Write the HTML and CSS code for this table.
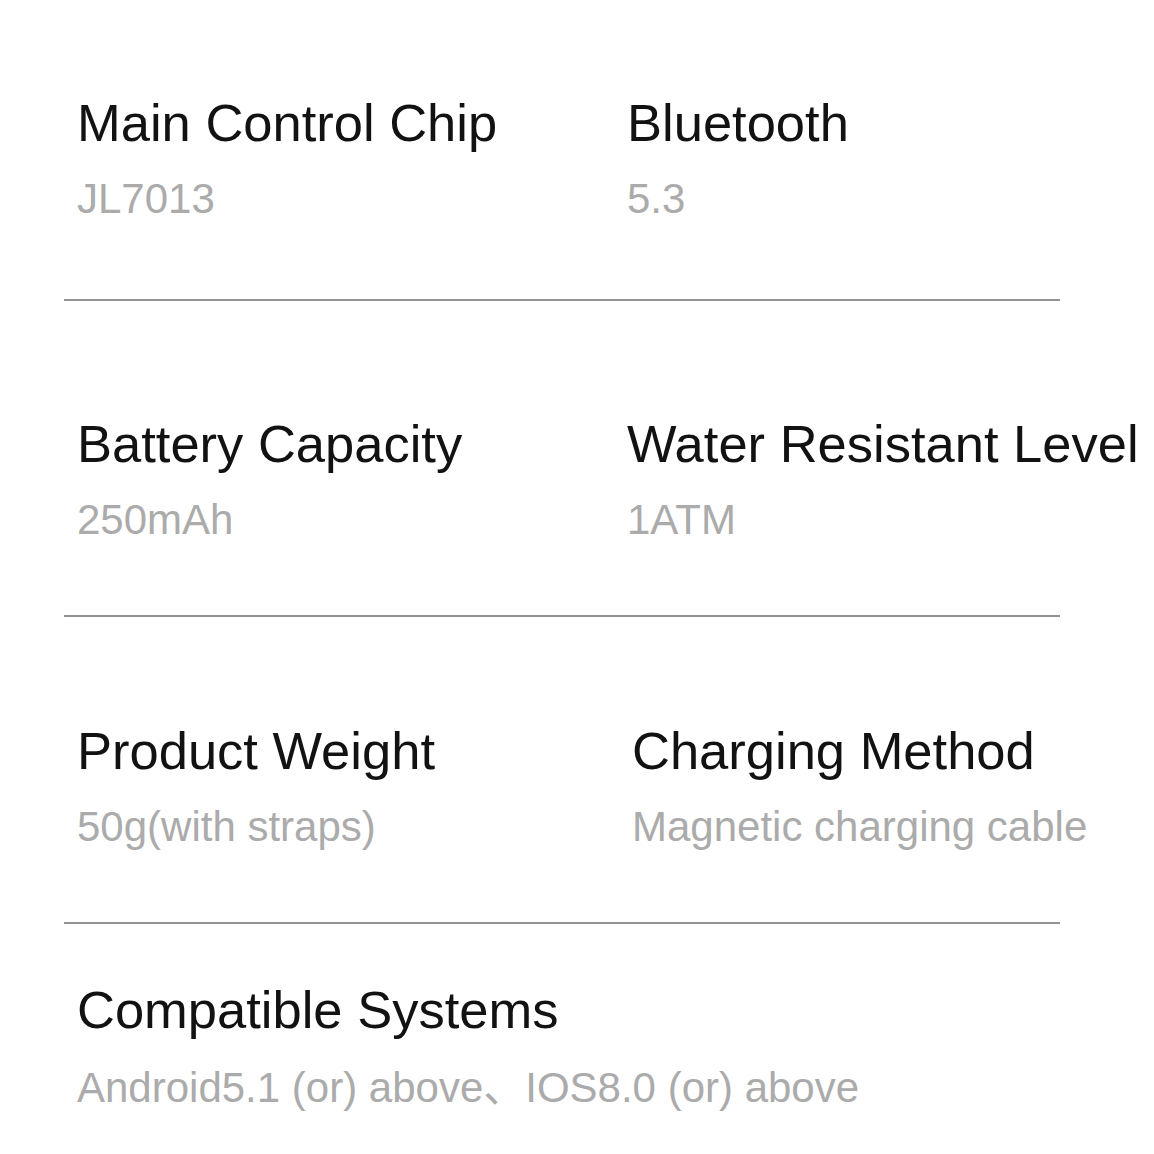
FILE: index.html
```html
<!DOCTYPE html>
<html lang="en">
<head>
<meta charset="utf-8">
<title>Specifications</title>
<link rel="stylesheet" href="styles.css">
</head>
<body>
<main class="specs">
  <section class="group group-first">
    <div class="item">
      <h2 class="label">Main Control Chip</h2>
      <p class="value">JL7013</p>
    </div>
    <div class="item">
      <h2 class="label">Bluetooth</h2>
      <p class="value">5.3</p>
    </div>
  </section>
  <hr class="divider">
  <section class="group">
    <div class="item">
      <h2 class="label">Battery Capacity</h2>
      <p class="value">250mAh</p>
    </div>
    <div class="item">
      <h2 class="label">Water Resistant Level</h2>
      <p class="value">1ATM</p>
    </div>
  </section>
  <hr class="divider">
  <section class="group group-third">
    <div class="item">
      <h2 class="label">Product Weight</h2>
      <p class="value">50g(with straps)</p>
    </div>
    <div class="item item-shift">
      <h2 class="label">Charging Method</h2>
      <p class="value">Magnetic charging cable</p>
    </div>
  </section>
  <hr class="divider">
  <section class="group group-last">
    <div class="item item-wide">
      <h2 class="label">Compatible Systems</h2>
      <p class="value">Android5.1 (or) above、IOS8.0 (or) above</p>
    </div>
  </section>
</main>
</body>
</html>
```

FILE: styles.css
```css
html, body {
  margin: 0;
  padding: 0;
  background: #ffffff;
}

.specs {
  width: 1154px;
  font-family: "Liberation Sans", Arial, "Noto Sans CJK SC", sans-serif;
}

.group {
  display: grid;
  grid-template-columns: 550px 1fr;
  padding: 113px 0 70px 77px;
}

.group-first {
  padding-top: 93px;
  padding-bottom: 75px;
}

.group-third {
  padding-top: 104px;
}

.group-last {
  padding-top: 56px;
  padding-bottom: 0;
}

.item {
  display: flex;
  flex-direction: column;
  gap: 21px;
  white-space: nowrap;
}

.item-shift {
  padding-left: 5px;
}

.item-wide {
  grid-column: 1 / -1;
  gap: 23px;
}

.label {
  margin: 0;
  font-size: 52.5px;
  line-height: 60px;
  font-weight: 400;
  color: #121212;
}

.value {
  margin: 0;
  font-size: 42px;
  line-height: 50px;
  color: #ababab;
}

.divider {
  margin: 0 0 0 64px;
  width: 996px;
  height: 2px;
  border: 0;
  background: #939393;
}
```
